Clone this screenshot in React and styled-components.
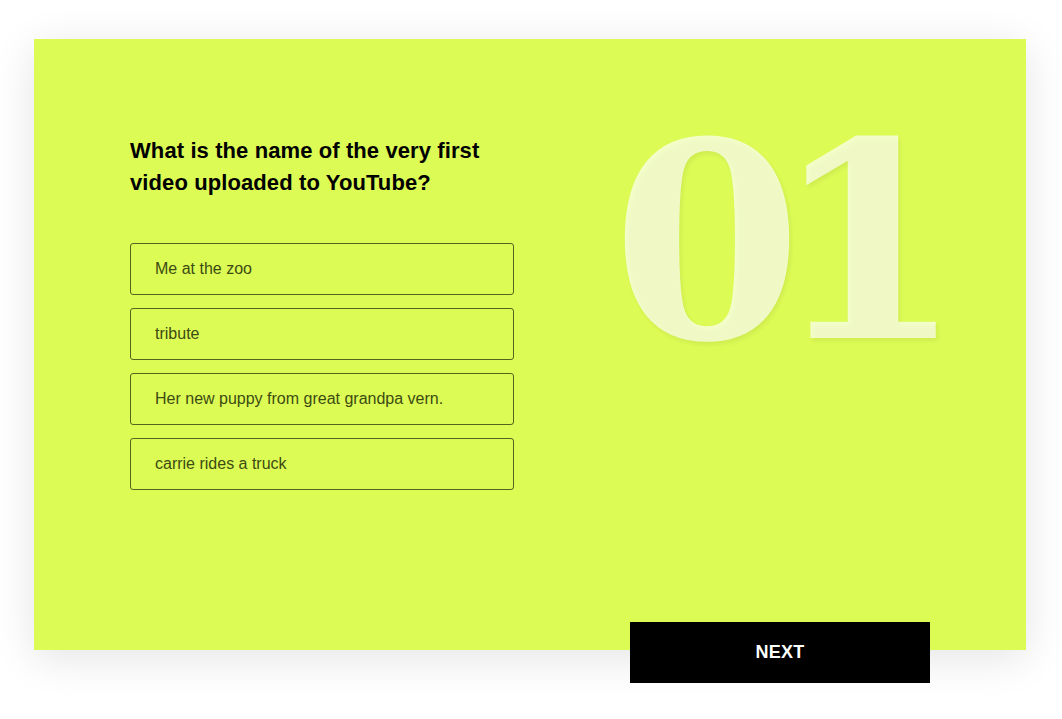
import styled, { createGlobalStyle } from "styled-components";

const GlobalStyle = createGlobalStyle`
  body {
    margin: 0;
    background: #ffffff;
    font-family: "Liberation Sans", Arial, sans-serif;
  }
`;

const Page = styled.div`
  min-height: 719px;
  box-sizing: border-box;
  padding: 39px 0 0 34px;
  display: flex;
  align-items: flex-start;
`;

const Card = styled.div`
  position: relative;
  width: 992px;
  height: 611px;
  box-sizing: border-box;
  background: #dcfb55;
  box-shadow: 0 8px 40px rgba(0, 0, 0, 0.11);
  padding: 96px 0 0 96px;
  display: flex;
`;

const QuestionColumn = styled.div`
  width: 384px;
  display: flex;
  flex-direction: column;
`;

const Question = styled.h2`
  margin: 0 0 44px;
  font-size: 22px;
  line-height: 32px;
  font-weight: 700;
  letter-spacing: 0.1px;
  color: #000;
`;

const Options = styled.div`
  display: flex;
  flex-direction: column;
  gap: 13px;
`;

const Option = styled.button`
  height: 52px;
  box-sizing: border-box;
  padding: 0 24px;
  text-align: left;
  background: transparent;
  border: 1px solid rgba(40, 50, 10, 0.75);
  border-radius: 3px;
  font-family: "Liberation Sans", Arial, sans-serif;
  font-size: 16px;
  color: #3d4b12;
  cursor: pointer;
`;

const Number = styled.div`
  margin: -29px 0 0 98px;
  font-family: "DejaVu Serif", "Liberation Serif", serif;
  font-weight: 700;
  font-size: 273px;
  line-height: 1;
  letter-spacing: -29px;
  color: rgba(255, 255, 255, 0.68);
  text-shadow: 2px 3px 4px rgba(0, 0, 0, 0.06);
  user-select: none;
`;

const NextButton = styled.button`
  position: absolute;
  left: 596px;
  bottom: -33px;
  width: 300px;
  height: 61px;
  border: none;
  background: #000;
  color: #fff;
  font-family: "Liberation Sans", Arial, sans-serif;
  font-size: 18px;
  font-weight: 700;
  letter-spacing: 0.2px;
  cursor: pointer;
`;

const answers = [
  "Me at the zoo",
  "tribute",
  "Her new puppy from great grandpa vern.",
  "carrie rides a truck",
];

export default function App() {
  return (
    <>
      <GlobalStyle />
      <Page>
        <Card>
          <QuestionColumn>
            <Question>
              What is the name of the very first video uploaded to YouTube?
            </Question>
            <Options>
              {answers.map((a) => (
                <Option key={a}>{a}</Option>
              ))}
            </Options>
          </QuestionColumn>
          <Number>01</Number>
          <NextButton>NEXT</NextButton>
        </Card>
      </Page>
    </>
  );
}
